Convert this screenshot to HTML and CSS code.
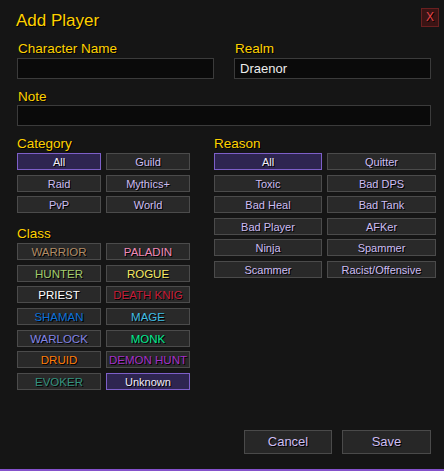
FILE: index.html
```html
<!DOCTYPE html>
<html lang="en">
<head>
<meta charset="utf-8">
<title>Add Player</title>
<link rel="stylesheet" href="styles.css">
</head>
<body>
<div class="dialog">
  <header class="title-bar">
    <h1 class="title">Add Player</h1>
    <button class="close" type="button">X</button>
  </header>

  <div class="fields">
    <div class="field">
      <label class="label">Character Name</label>
      <div class="input"></div>
    </div>
    <div class="field">
      <label class="label">Realm</label>
      <div class="input">Draenor</div>
    </div>
  </div>

  <div class="field note">
    <label class="label">Note</label>
    <div class="input"></div>
  </div>

  <div class="filters">
    <div class="col-left">
      <section class="group">
        <div class="group-label">Category</div>
        <div class="grid grid-cat">
          <button class="btn selected">All</button>
          <button class="btn">Guild</button>
          <button class="btn">Raid</button>
          <button class="btn">Mythics+</button>
          <button class="btn">PvP</button>
          <button class="btn">World</button>
        </div>
      </section>
      <section class="group group-class">
        <div class="group-label">Class</div>
        <div class="grid grid-class">
          <button class="btn cls warrior">WARRIOR</button>
          <button class="btn cls paladin">PALADIN</button>
          <button class="btn cls hunter">HUNTER</button>
          <button class="btn cls rogue">ROGUE</button>
          <button class="btn cls priest">PRIEST</button>
          <button class="btn cls dk">DEATH KNIG</button>
          <button class="btn cls shaman">SHAMAN</button>
          <button class="btn cls mage">MAGE</button>
          <button class="btn cls warlock">WARLOCK</button>
          <button class="btn cls monk">MONK</button>
          <button class="btn cls druid">DRUID</button>
          <button class="btn cls dh">DEMON HUNT</button>
          <button class="btn cls evoker">EVOKER</button>
          <button class="btn selected unknown">Unknown</button>
        </div>
      </section>
    </div>
    <div class="col-right">
      <section class="group">
        <div class="group-label">Reason</div>
        <div class="grid grid-reason">
          <button class="btn selected">All</button>
          <button class="btn">Quitter</button>
          <button class="btn">Toxic</button>
          <button class="btn">Bad DPS</button>
          <button class="btn">Bad Heal</button>
          <button class="btn">Bad Tank</button>
          <button class="btn">Bad Player</button>
          <button class="btn">AFKer</button>
          <button class="btn">Ninja</button>
          <button class="btn">Spammer</button>
          <button class="btn">Scammer</button>
          <button class="btn">Racist/Offensive</button>
        </div>
      </section>
    </div>
  </div>

  <div class="actions">
    <button class="action cancel">Cancel</button>
    <button class="action save">Save</button>
  </div>
</div>
</body>
</html>
```

FILE: styles.css
```css
* { box-sizing: border-box; }

html, body {
  margin: 0;
  padding: 0;
  background: #151515;
}

body {
  font-family: "Liberation Sans", Arial, sans-serif;
}

.dialog {
  width: 444px;
  height: 471px;
  display: flex;
  flex-direction: column;
  padding: 11px 13px 15px 17px;
  background: #151515;
  border-bottom: 2px solid #8552cc;
}

.title-bar {
  display: flex;
  justify-content: space-between;
  align-items: flex-start;
  height: 20px;
}

.title {
  margin: 0 0 0 -1px;
  font-size: 17px;
  line-height: 20px;
  font-weight: normal;
  color: #ffd100;
  text-shadow: 1px 1px 0 #000;
}

.close {
  margin: -3px -8px 0 0;
  width: 18px;
  height: 19px;
  padding: 0;
  background: #3a1414;
  border: 1px solid #6a2020;
  color: #e5474a;
  font-family: "Liberation Sans", Arial, sans-serif;
  font-size: 12px;
  line-height: 17px;
  text-shadow: 1px 1px 0 #000;
}

.fields {
  display: grid;
  grid-template-columns: 197px 197px;
  column-gap: 20px;
  margin-top: 9.5px;
}

.label, .group-label {
  display: block;
  color: #ffd100;
  font-size: 13.5px;
  text-shadow: 1px 1px 0 #000;
}

.label {
  line-height: 16px;
  margin-bottom: 1.5px;
  padding-left: 1px;
}

.input {
  height: 21px;
  background: #0a0a0a;
  border: 1px solid #3b3b3b;
  padding: 0 5px;
  color: #ececec;
  font-size: 13px;
  line-height: 19px;
}

.note {
  margin-top: 9.5px;
}

.note .label {
  margin-bottom: 0;
}

.filters {
  display: flex;
  gap: 24px;
  margin-top: 10.5px;
}

.col-left {
  width: 173px;
  flex: none;
}

.col-right {
  flex: none;
}

.group-label {
  line-height: 15px;
  margin-bottom: 2px;
}

.group-class {
  margin-top: 13px;
}

.grid {
  display: grid;
  row-gap: 4.5px;
  column-gap: 5px;
}

.grid-cat, .grid-class {
  grid-template-columns: 84px 84px;
}

.grid-class {
  row-gap: 4.7px;
}

.grid-reason {
  grid-template-columns: 108px 109px;
}

.btn {
  height: 17px;
  margin: 0;
  padding: 1px 0 0;
  background: #292929;
  border: 1px solid #4b4b4b;
  color: #cdbdf3;
  font-family: "Liberation Sans", Arial, sans-serif;
  font-size: 11px;
  line-height: 14px;
  text-align: center;
  white-space: nowrap;
  overflow: hidden;
  text-shadow: 1px 1px 0 #000;
}

.btn.selected {
  background: #2e2550;
  border-color: #7d5fc8;
  color: #f2eefa;
}

.cls { font-size: 11.5px; }
.warrior { color: #b08b65; }
.paladin { color: #ee8ab8; }
.hunter  { color: #a2cc6c; }
.rogue   { color: #f6ea64; }
.priest  { color: #ffffff; }
.dk      { color: #c41e3a; }
.shaman  { color: #0a70d8; }
.mage    { color: #3fbde3; }
.warlock { color: #8284e6; }
.monk    { color: #00eb90; }
.druid   { color: #ff7c0a; }
.dh      { color: #a330c9; }
.evoker  { color: #33937f; }

.actions {
  margin-top: auto;
  display: flex;
  justify-content: flex-end;
  gap: 10px;
}

.action {
  height: 24px;
  margin: 0;
  padding: 0;
  background: #272727;
  border: 1px solid #4a4a4a;
  color: #cdbdf3;
  font-family: "Liberation Sans", Arial, sans-serif;
  font-size: 13px;
  line-height: 22px;
  text-shadow: 1px 1px 0 #000;
}

.cancel { width: 88px; }
.save { width: 89px; }
```
